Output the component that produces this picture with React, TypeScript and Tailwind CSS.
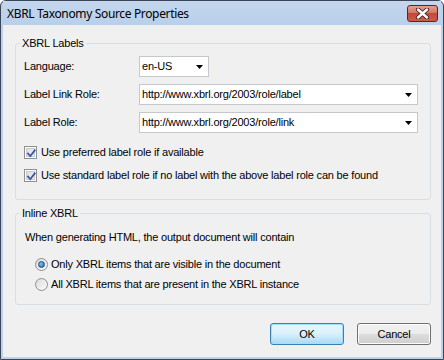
import React from "react";

function Checkbox() {
  return (
    <div className="w-[13px] h-[13px] border border-[#8e8f8f] bg-white p-[1px] shrink-0">
      <div className="w-full h-full bg-gradient-to-br from-[#d9dcde] to-[#f7f7f7] border border-[#c8cbcd] relative">
        <svg className="absolute -left-[1px] -top-[1px]" width="11" height="11" viewBox="0 0 11 11">
          <path d="M2 5.5 L4.3 8 L8.8 2.3" fill="none" stroke="#3b59a8" strokeWidth="1.8" strokeLinecap="square" />
        </svg>
      </div>
    </div>
  );
}

function Radio({ checked }: { checked?: boolean }) {
  return (
    <div className="w-[13px] h-[13px] rounded-full border border-[#8e8f8f] bg-gradient-to-br from-[#dcdcdc] to-[#fbfbfb] flex items-center justify-center shrink-0">
      {checked && (
        <div className="w-[7px] h-[7px] rounded-full bg-[radial-gradient(circle_at_35%_35%,#7cc8f5,#1b5fa3)] border border-[#1d4f84]" />
      )}
    </div>
  );
}

function Arrow() {
  return (
    <svg width="7" height="4" viewBox="0 0 7 4" className="shrink-0">
      <path d="M0 0 H7 L3.5 4 Z" fill="#000" />
    </svg>
  );
}

function Select({ value, width }: { value: string; width: string }) {
  return (
    <div className={`${width} h-[21px] border border-[#c5c8cc] bg-white flex items-center pl-[2px] pr-[5px] justify-between`}>
      <span className="leading-[13px]">{value}</span>
      <Arrow />
    </div>
  );
}

export default function App() {
  return (
    <div className="w-[444px] h-[360px] bg-white font-['Liberation_Sans',Arial,sans-serif] text-[11px] tracking-[-0.2px] text-black">
      <div className="w-full h-full flex flex-col rounded-t-[6px] border border-[#3a4657] bg-[#bcd1ea] px-[2px] pb-[2px]">
        <div className="h-[24px] shrink-0 relative bg-gradient-to-b from-[#c4d7ee] to-[#b9cfe9]">
          <div className="ml-[4px] mt-[5px] font-['Noto_Sans',sans-serif] text-[12px] tracking-[-0.35px] leading-[16px] text-black">
            XBRL Taxonomy Source Properties
          </div>
          <div className="absolute right-[3px] top-[4px] w-[31px] h-[17px] rounded-[3px] border border-[#5e2323] bg-[linear-gradient(to_bottom,#e3a092_0%,#d27767_45%,#c4473a_50%,#cc5c4b_100%)] flex items-center justify-center">
            <svg width="15" height="11" viewBox="0 0 15 11">
              <path d="M3 1.5 L12 9.5 M12 1.5 L3 9.5" stroke="#4a1a1a" strokeWidth="4.2" strokeLinecap="round" />
              <path d="M3 1.5 L12 9.5 M12 1.5 L3 9.5" stroke="#ffffff" strokeWidth="2.4" strokeLinecap="round" />
            </svg>
          </div>
        </div>
        <div className="flex-1 bg-[#f0f0f0] pl-[12px] pt-[18px] flex flex-col">
          {/* Group 1 */}
          <div className="w-[416px] relative border border-[#d5dfe5] rounded-[3px] pt-[12px] pb-[17px] flex flex-col">
            <span className="absolute -top-[7px] left-[4px] px-[2px] bg-[#f0f0f0] leading-[13px]">XBRL Labels</span>
            <div className="flex flex-col gap-[7px] pl-[123px] relative">
              <div className="flex items-center h-[21px]">
                <span className="absolute left-[8px] leading-[13px]">Language:</span>
                <Select value="en-US" width="w-[70px]" />
              </div>
              <div className="flex items-center h-[21px]">
                <span className="absolute left-[8px] leading-[13px]">Label Link Role:</span>
                <Select value="http://www.xbrl.org/2003/role/label" width="w-[279px]" />
              </div>
              <div className="flex items-center h-[21px]">
                <span className="absolute left-[8px] leading-[13px]">Label Role:</span>
                <Select value="http://www.xbrl.org/2003/role/link" width="w-[279px]" />
              </div>
            </div>
            <div className="flex items-center gap-[4px] pl-[8px] mt-[13px] h-[13px]">
              <Checkbox />
              <span className="leading-[13px]">Use preferred label role if available</span>
            </div>
            <div className="flex items-center gap-[4px] pl-[8px] mt-[10px] h-[13px]">
              <Checkbox />
              <span className="leading-[13px]">Use standard label role if no label with the above label role can be found</span>
            </div>
          </div>
          {/* Group 2 */}
          <div className="w-[416px] mt-[13px] relative border border-[#d5dfe5] rounded-[3px] pt-[17px] pb-[13px] flex flex-col">
            <span className="absolute -top-[7px] left-[4px] px-[2px] bg-[#f0f0f0] leading-[13px]">Inline XBRL</span>
            <div className="pl-[9px] leading-[13px]">When generating HTML, the output document will contain</div>
            <div className="flex items-center gap-[3px] pl-[19px] mt-[14px] h-[13px]">
              <Radio checked />
              <span className="leading-[13px]">Only XBRL items that are visible in the document</span>
            </div>
            <div className="flex items-center gap-[3px] pl-[19px] mt-[7px] h-[13px]">
              <Radio />
              <span className="leading-[13px]">All XBRL items that are present in the XBRL instance</span>
            </div>
          </div>
          {/* Buttons */}
          <div className="w-[416px] mt-[18px] flex justify-end gap-[13px]">
            <div className="w-[74px] h-[22px] rounded-[3px] border border-[#3c7fb1] bg-gradient-to-b from-[#eaf6fd] via-[#d9f0fc] to-[#a7d9f5] shadow-[inset_0_0_0_1px_#9ee2fa] flex items-center justify-center leading-[13px]">
              OK
            </div>
            <div className="w-[74px] h-[22px] rounded-[3px] border border-[#707070] bg-[linear-gradient(to_bottom,#f2f2f2_0%,#ebebeb_50%,#dddddd_50%,#cfcfcf_100%)] shadow-[inset_0_0_0_1px_#fcfcfc] flex items-center justify-center leading-[13px]">
              Cancel
            </div>
          </div>
        </div>
      </div>
    </div>
  );
}
